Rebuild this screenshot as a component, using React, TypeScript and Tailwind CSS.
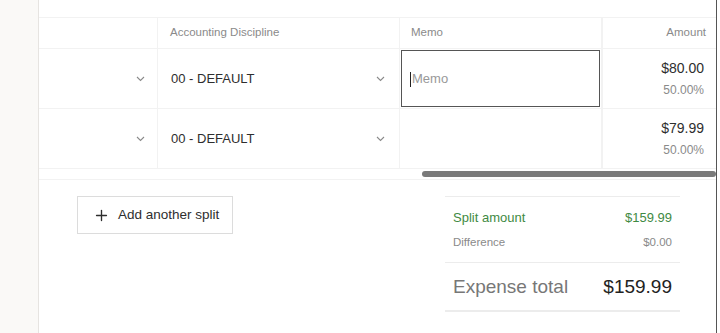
import { Plus } from 'lucide-react';

const rows = [
  { discipline: '00 - DEFAULT', amount: '$80.00', percent: '50.00%', editing: true },
  { discipline: '00 - DEFAULT', amount: '$79.99', percent: '50.00%', editing: false },
];

function Chevron() {
  return (
    <svg width="9" height="6" viewBox="0 0 9 6" className="text-[#8a8a8a]">
      <polyline points="1,1 4.5,4.5 8,1" fill="none" stroke="currentColor" strokeWidth="1.1" />
    </svg>
  );
}

export default function App() {
  return (
    <div className="w-[720px] h-[333px] flex bg-white overflow-hidden text-[#333] font-['Liberation_Sans',Arial,sans-serif]">
      <div className="w-[39px] shrink-0 bg-[#faf9f7] border-r border-[#e6e4e1]" />

      <div className="w-[677px] shrink-0 flex flex-col">
        <div className="h-[18px] border-b border-[#f2f2f2]" />

        <div className="border-b border-[#f2f2f2]">
          <div className="grid grid-cols-[119px_242px_203px_113px] h-[31px] border-b border-[#f2f2f2] text-[11.5px] text-[#8a8a8a]">
            <div className="border-r border-[#f2f2f2]" />
            <div className="border-r border-[#f2f2f2] flex items-center pl-[12px]">Accounting Discipline</div>
            <div className="border-r-2 border-[#f2f2f2] flex items-center pl-[11px]">Memo</div>
            <div className="flex items-center justify-end pr-[10px]">Amount</div>
          </div>

          {rows.map((row, i) => (
            <div key={i} className="grid grid-cols-[119px_242px_203px_113px] h-[60px] border-b border-[#f2f2f2]">
              <div className="border-r border-[#f2f2f2] flex items-center justify-end pr-[12px]">
                <Chevron />
              </div>
              <div className="border-r border-[#f2f2f2] flex items-center justify-between pl-[13px] pr-[14px] pt-px text-[13px] text-[#2e2e2e]">
                <span>{row.discipline}</span>
                <Chevron />
              </div>
              <div className="border-r-2 border-[#f2f2f2] py-px pl-px pr-px">
                {row.editing && (
                  <div className="h-full border border-[#555] flex items-center pl-[8px] pt-px text-[13px] text-[#999]">
                    <span className="w-px h-[15px] bg-[#222] mr-px" />
                    Memo
                  </div>
                )}
              </div>
              <div className="flex flex-col items-end justify-center pr-[12px] gap-[9px]">
                <span className="text-[14px] text-[#2e2e2e] leading-none">{row.amount}</span>
                <span className="text-[12px] text-[#8a8a8a] leading-none">{row.percent}</span>
              </div>
            </div>
          ))}

          <div className="h-[10px] flex items-center pl-[383px]">
            <div className="h-[6px] w-[294px] rounded-full bg-[#7a7a7a]" />
          </div>
        </div>

        <div className="flex justify-between pt-[16px] pl-[38px] pr-[36px]">
          <button className="h-[38px] w-[156px] border border-[#dcdcdc] flex items-center gap-[8px] pl-[15px] text-[13.5px] text-[#2e2e2e]">
            <Plus className="w-[17px] h-[17px]" strokeWidth={1.9} />
            Add another split
          </button>

          <div className="w-[235px] border-t border-[#ececec]">
            <div className="h-[65px] px-[8px] pt-[14px]">
              <div className="flex justify-between text-[13px] text-[#3f8a43] leading-[14px]">
                <span>Split amount</span>
                <span>$159.99</span>
              </div>
              <div className="mt-[11px] flex justify-between text-[11.5px] text-[#8a8a8a] leading-[12px]">
                <span>Difference</span>
                <span>$0.00</span>
              </div>
            </div>
            <div className="border-t border-[#ececec] border-b-2 border-b-[#ececec] h-[50px] px-[8px] pt-px flex items-center justify-between">
              <span className="text-[19px] text-[#777]">Expense total</span>
              <span className="text-[19px] text-[#222]">$159.99</span>
            </div>
          </div>
        </div>
      </div>

      <div className="w-px shrink-0 bg-[#555]" />
      <div className="flex-1 bg-white" />
    </div>
  );
}
